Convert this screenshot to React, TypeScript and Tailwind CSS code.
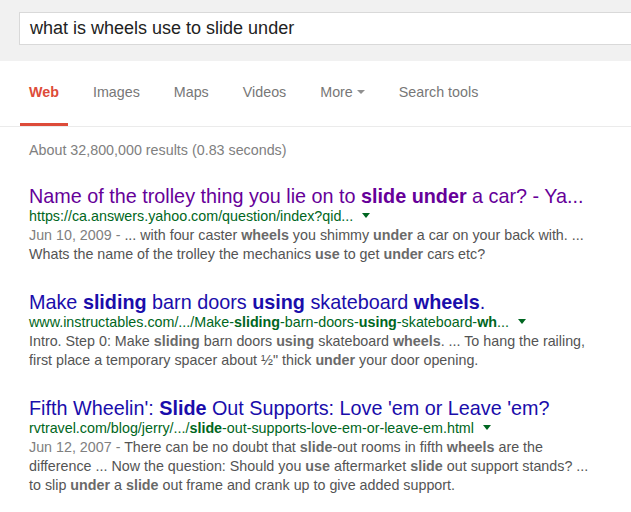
import React from 'react';

const tabs = ['Web', 'Images', 'Maps', 'Videos', 'More', 'Search tools'];

const Arrow = ({ color }: { color: string }) => (
  <span
    className="inline-block w-0 h-0 border-x-[4px] border-x-transparent border-t-[5px] align-middle ml-[9px] mb-[3px]"
    style={{ borderTopColor: color }}
  />
);

interface ResultProps {
  title: React.ReactNode;
  url: React.ReactNode;
  lines: React.ReactNode[];
  visited?: boolean;
}

const Result: React.FC<ResultProps> = ({ title, url, lines, visited }) => (
  <div className="mb-[27px]">
    <div
      className={`text-[19.8px] leading-[22px] whitespace-nowrap ${visited ? 'text-[#660099]' : 'text-[#1a0dab]'}`}
    >
      {title}
    </div>
    <div className="text-[14.3px] leading-[19px] text-[#006621] whitespace-nowrap">
      {url}
      <Arrow color="#006621" />
    </div>
    <div className="text-[14.3px] leading-[19px] text-[#545454] whitespace-nowrap">
      {lines.map((l, i) => (
        <div key={i}>{l}</div>
      ))}
    </div>
  </div>
);

const B = ({ children }: { children: React.ReactNode }) => <b className="font-bold text-[#6a6a6a]">{children}</b>;
const G = ({ children }: { children: React.ReactNode }) => <b className="font-bold">{children}</b>;
const D = ({ children }: { children: React.ReactNode }) => <span className="text-[#808080]">{children}</span>;

export default function App() {
  return (
    <div className="w-[631px] h-[512px] overflow-hidden bg-white font-['Liberation_Sans',Arial,sans-serif]">
      {/* Search header */}
      <div className="h-[61px] bg-[#f1f1f1] pt-[12px] pl-[19px]">
        <div className="w-[700px] h-[33px] border border-[#d9d9d9] bg-white pl-[10px] text-[18px] leading-[31px] text-[#222]">
          what is wheels use to slide under
        </div>
      </div>

      {/* Tabs */}
      <div className="h-[66px] border-b border-[#ebebeb] flex items-end pl-[20px] gap-[16px]">
        {tabs.map((t) => (
          <div
            key={t}
            className={`px-[9px] pb-[21px] border-b-[3px] text-[14.3px] leading-[20px] whitespace-nowrap ${
              t === 'Web' ? 'border-[#dd4b39] text-[#dd4b39] font-bold' : 'border-transparent text-[#777]'
            }`}
          >
            {t}
            {t === 'More' && (
              <span className="inline-block w-0 h-0 border-x-[4px] border-x-transparent border-t-[4px] border-t-[#909090] align-middle ml-[4px] mb-[2px]" />
            )}
          </div>
        ))}
      </div>

      <div className="pl-[29px]">
        <div className="pt-[14px] text-[14.3px] leading-[19px] text-[#808080] mb-[25px]">
          About 32,800,000 results (0.83 seconds)
        </div>

        <Result
          visited
          title={<>Name of the trolley thing you lie on to <b>slide under</b> a car? - Ya...</>}
          url={<>https://ca.answers.yahoo.com/question/index?qid...</>}
          lines={[
            <>
              <D>Jun 10, 2009 - </D>... with four caster <B>wheels</B> you shimmy <B>under</B> a car on your back with. ...
            </>,
            <>
              Whats the name of the trolley the mechanics <B>use</B> to get <B>under</B> cars etc?
            </>,
          ]}
        />

        <Result
          title={<>Make <b>sliding</b> barn doors <b>using</b> skateboard <b>wheels</b>.</>}
          url={
            <>
              www.instructables.com/.../Make-<G>sliding</G>-barn-doors-<G>using</G>-skateboard-<G>wh</G>...
            </>
          }
          lines={[
            <>
              Intro. Step 0: Make <B>sliding</B> barn doors <B>using</B> skateboard <B>wheels</B>. ... To hang the railing,
            </>,
            <>
              first place a temporary spacer about ½" thick <B>under</B> your door opening.
            </>,
          ]}
        />

        <Result
          title={<>Fifth Wheelin': <b>Slide</b> Out Supports: Love 'em or Leave 'em?</>}
          url={
            <>
              rvtravel.com/blog/jerry/.../<G>slide</G>-out-supports-love-em-or-leave-em.html
            </>
          }
          lines={[
            <>
              <D>Jun 12, 2007 - </D>There can be no doubt that <B>slide</B>-out rooms in fifth <B>wheels</B> are the
            </>,
            <>
              difference ... Now the question: Should you <B>use</B> aftermarket <B>slide</B> out support stands? ...
            </>,
            <>
              to slip <B>under</B> a <B>slide</B> out frame and crank up to give added support.
            </>,
          ]}
        />
      </div>
    </div>
  );
}
